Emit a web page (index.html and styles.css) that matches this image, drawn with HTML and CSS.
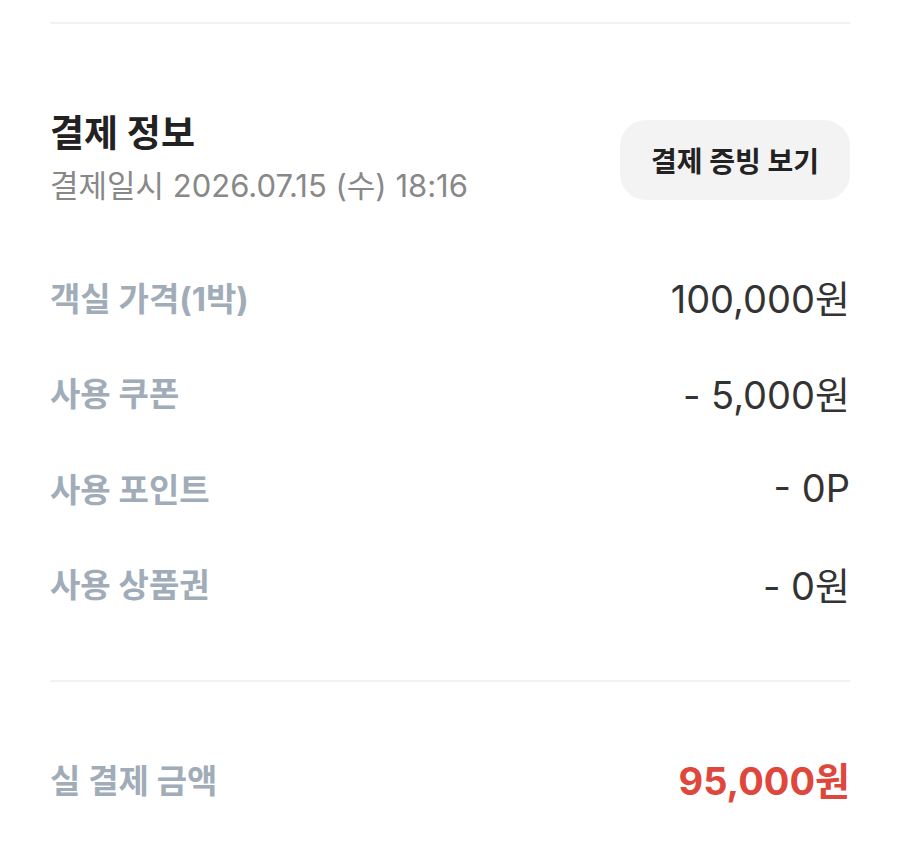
FILE: index.html
```html
<!DOCTYPE html>
<html lang="ko">
<head>
    <meta charset="UTF-8">
    <meta name="viewport" content="width=device-width, initial-scale=1.0">
    <title>결제 정보</title>
    <link rel="stylesheet" href="styles.css">
</head>
<body>

    <div class="payment">
        <div class="line line-top"></div>

        <!-- Title + receipt button -->
        <div class="payment-header">
            <div>
                <div class="payment-title">결제 정보</div>
                <div class="payment-date">결제일시 2026.07.15 (수) 18:16</div>
            </div>
            <button class="button-receipt">결제 증빙 보기</button>
        </div>

        <!-- Price breakdown -->
        <div class="price-list">
            <div class="price-row">
                <span class="price-label">객실 가격(1박)</span>
                <span class="price-value">100,000원</span>
            </div>
            <div class="price-row">
                <span class="price-label">사용 쿠폰</span>
                <span class="price-value">- 5,000원</span>
            </div>
            <div class="price-row">
                <span class="price-label">사용 포인트</span>
                <span class="price-value">- 0P</span>
            </div>
            <div class="price-row">
                <span class="price-label">사용 상품권</span>
                <span class="price-value">- 0원</span>
            </div>
        </div>

        <div class="line line-total"></div>

        <div class="price-row price-total">
            <span class="price-label">실 결제 금액</span>
            <span class="price-value">95,000원</span>
        </div>
    </div>

</body>
</html>
```

FILE: styles.css
```css
body {
    font-family: 'Inter', 'Noto Sans CJK KR', sans-serif;
    background-color: #fff;
    color: #222;
    margin: 0;
}

.payment {
    padding: 0 50px;
}

.line {
    height: 2px;
    background-color: #f2f2f2;
}

.line-top {
    margin-top: 22px;
}

.payment-header {
    display: flex;
    justify-content: space-between;
    align-items: center;
    margin-top: 86px;
}

.payment-title {
    font-size: 37px;
    font-weight: bold;
    line-height: 44px;
    margin-top: 2px;
    color: #222;
}

.payment-date {
    font-size: 31px;
    line-height: 40px;
    margin-top: 10px;
    color: #888;
}

.button-receipt {
    font-family: inherit;
    font-size: 28px;
    font-weight: bold;
    color: #222;
    background-color: #f3f3f3;
    border: none;
    border-radius: 26px;
    height: 80px;
    width: 230px;
    margin-top: 4px;
    cursor: pointer;
}

.price-list {
    margin-top: 43px;
}

.price-row {
    display: flex;
    justify-content: space-between;
    align-items: center;
    height: 95.5px;
}

.price-label {
    font-size: 33px;
    font-weight: bold;
    color: #a0acb8;
}

.price-value {
    font-size: 38px;
    color: #333;
}

.line-total {
    margin-top: 49px;
}

.price-total {
    margin-top: 49px;
}

.price-total .price-value {
    font-weight: bold;
    font-size: 38px;
    color: #e0473c;
}
```
